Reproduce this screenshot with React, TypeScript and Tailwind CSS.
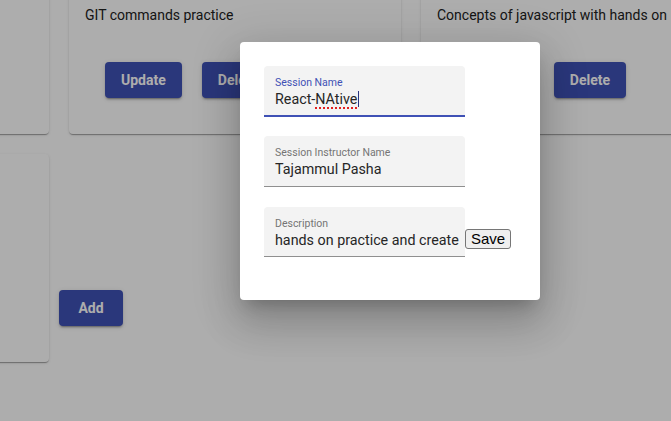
type Session = {
  title: string;
  description: string;
};

const sessions: Session[] = [
  { title: "HTML", description: "Basics of markup" },
  { title: "Git", description: "GIT commands practice" },
  { title: "JavaScript", description: "Concepts of javascript with hands on" },
];

function ActionButton({ label }: { label: string }) {
  return (
    <button
      type="button"
      className="h-9 min-w-16 rounded-[4px] bg-[#3f51b5] px-4 text-[14px] font-bold text-white shadow-[0_3px_1px_-2px_rgba(0,0,0,0.2),0_2px_2px_0_rgba(0,0,0,0.14),0_1px_5px_0_rgba(0,0,0,0.12)]"
    >
      {label}
    </button>
  );
}

function SessionCard({ session }: { session?: Session }) {
  return (
    <div className="flex h-[208px] w-[332px] shrink-0 flex-col rounded-[4px] bg-white px-4 pt-4 shadow-[0_2px_1px_-1px_rgba(0,0,0,0.2),0_1px_1px_0_rgba(0,0,0,0.14),0_1px_3px_0_rgba(0,0,0,0.12)]">
      {session ? (
        <>
          <h2 className="text-[20px] font-medium leading-[28px] text-[#212121]">{session.title}</h2>
          <p className="mt-[35px] whitespace-nowrap text-[14px] leading-[20px] text-[#212121]">{session.description}</p>
          <div className="mt-[37px] flex gap-5 pl-5">
            <ActionButton label="Update" />
            <ActionButton label="Delete" />
          </div>
        </>
      ) : null}
    </div>
  );
}

function FilledField({
  label,
  children,
  focused = false,
  className = "",
}: {
  label: string;
  children: React.ReactNode;
  focused?: boolean;
  className?: string;
}) {
  return (
    <div
      className={`w-[201px] shrink-0 rounded-t-[4px] bg-[#f3f3f3] px-[11px] pt-[10px] ${
        focused ? "border-b-2 border-[#3f51b5]" : "border-b border-[#8f8f8f]"
      } ${className}`}
    >
      <div className={`text-[10.5px] leading-[13px] ${focused ? "text-[#3f51b5]" : "text-[#757575]"}`}>{label}</div>
      <div className="mt-px whitespace-nowrap text-[14.3px] leading-[18px] text-[#262626]">{children}</div>
    </div>
  );
}

export default function App() {
  return (
    <div className="relative h-[421px] w-[671px] overflow-hidden bg-white font-['Roboto',sans-serif]">
      <div className="ml-[-283px] mt-[-74px] flex flex-col gap-5">
        <div className="flex gap-5">
          {sessions.map((s) => (
            <SessionCard key={s.title} session={s} />
          ))}
        </div>
        <div className="flex">
          <SessionCard />
          <div className="ml-[10px] mt-[136px]">
            <ActionButton label="Add" />
          </div>
        </div>
      </div>

      <div className="absolute inset-0 bg-black/[0.32]" />

      <div className="absolute left-[240px] top-[42px] h-[258px] w-[300px] rounded-[4px] bg-white p-6 shadow-[0_11px_15px_-7px_rgba(0,0,0,0.2),0_24px_38px_3px_rgba(0,0,0,0.14),0_9px_46px_8px_rgba(0,0,0,0.12)]">
        <FilledField label="Session Name" focused className="h-[51px]">
          React-
          <span className="underline decoration-[#e02020] decoration-dotted decoration-[1.5px] underline-offset-[3px]">
            NAtive
          </span>
          <span className="ml-px inline-block h-[16px] w-px bg-[#2a3580] align-[-3px]" />
        </FilledField>
        <FilledField label="Session Instructor Name" className="mt-[19px] h-[51px]">
          Tajammul Pasha
        </FilledField>
        <div className="mt-[20px] flex items-end">
          <FilledField label="Description" className="h-[50px]">
            hands on practice and create
          </FilledField>
          <button
            type="button"
            className="mb-[8px] h-[20px] rounded-[3px] border border-[#767676] bg-[#efefef] px-[5px] font-['Liberation_Sans',sans-serif] text-[15px] leading-[16px] text-black"
          >
            Save
          </button>
        </div>
      </div>
    </div>
  );
}
